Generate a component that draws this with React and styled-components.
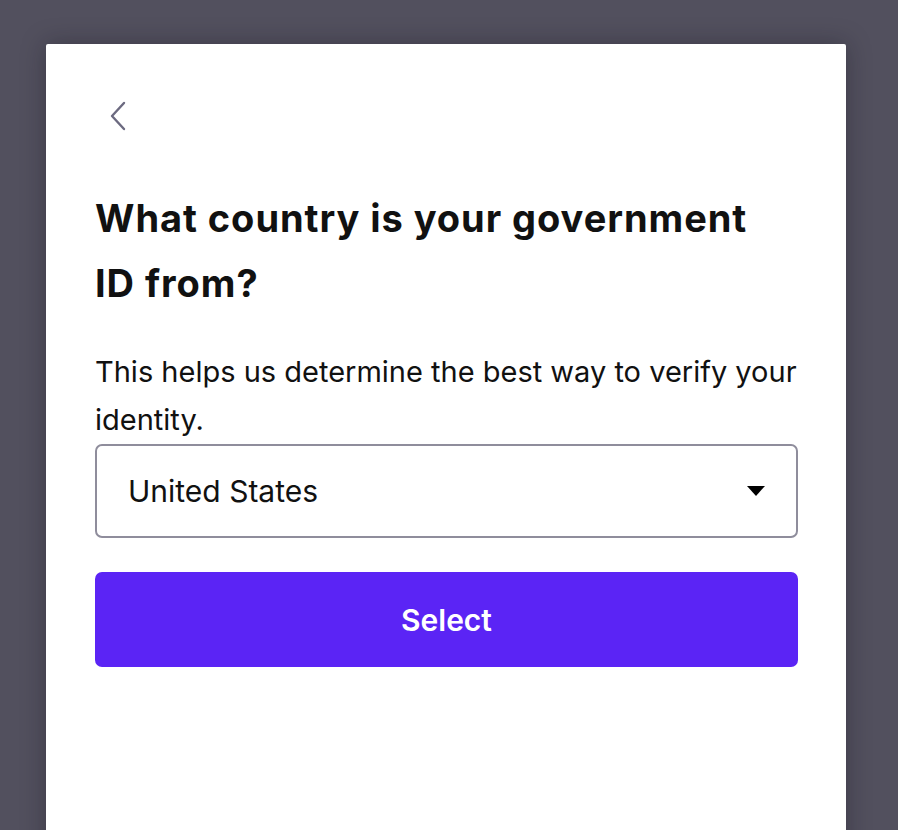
import React from "react";
import styled, { createGlobalStyle } from "styled-components";

const Global = createGlobalStyle`
  html, body { margin: 0; padding: 0; }
  body {
    background: #52505e;
    font-family: Inter, "Noto Sans", sans-serif;
    overflow: hidden;
  }
`;

const Page = styled.div`
  display: flex;
  justify-content: flex-start;
  padding: 44px 0 0 46px;
  min-height: 830px;
  box-sizing: border-box;
`;

const Card = styled.div`
  width: 800px;
  min-height: 820px;
  background: #ffffff;
  border-radius: 2px 2px 0 0;
  box-shadow: 0 0 24px rgba(20, 18, 30, 0.35);
  padding: 56px 48px 0 49px;
  box-sizing: border-box;
  display: flex;
  flex-direction: column;
`;

const BackButton = styled.button`
  width: 40px;
  height: 32px;
  padding: 0;
  margin: 0 0 0 14px;
  border: none;
  background: transparent;
  display: flex;
  align-items: center;
  justify-content: flex-start;
  cursor: pointer;
`;

const Heading = styled.h1`
  margin: 54px 0 0;
  font-size: 38px;
  line-height: 65px;
  font-weight: 700;
  color: #111111;
  letter-spacing: 0.95px;
`;

const Description = styled.p`
  margin: 32px 0 0;
  font-size: 29px;
  line-height: 48px;
  font-weight: 400;
  color: #111111;
`;

const SelectBox = styled.div`
  margin-top: 0;
  height: 94px;
  border: 2px solid #8f8d9c;
  border-radius: 7px;
  box-sizing: border-box;
  display: flex;
  align-items: center;
  justify-content: space-between;
  padding: 0 31px 0 31px;
  font-size: 30px;
  color: #111111;
`;

const PrimaryButton = styled.button`
  margin-top: 34px;
  height: 95px;
  width: 100%;
  border: none;
  border-radius: 7px;
  background: #5b24f5;
  color: #ffffff;
  font-family: inherit;
  font-size: 30px;
  font-weight: 600;
  cursor: pointer;
`;

export default function App() {
  return (
    <>
      <Global />
      <Page>
        <Card>
          <BackButton aria-label="Back">
            <svg width="18" height="30" viewBox="0 0 18 30" fill="none">
              <polyline
                points="15,2 3,15 15,28"
                stroke="#6c6a80"
                strokeWidth="2.4"
                strokeLinecap="round"
                strokeLinejoin="round"
              />
            </svg>
          </BackButton>
          <Heading>
            What country is your government
            <br />
            ID from?
          </Heading>
          <Description>
            This helps us determine the best way to verify your identity.
          </Description>
          <SelectBox>
            <span>United States</span>
            <svg width="18" height="10" viewBox="0 0 18 10">
              <polygon points="0,0 18,0 9,10" fill="#000" />
            </svg>
          </SelectBox>
          <PrimaryButton>Select</PrimaryButton>
        </Card>
      </Page>
    </>
  );
}
